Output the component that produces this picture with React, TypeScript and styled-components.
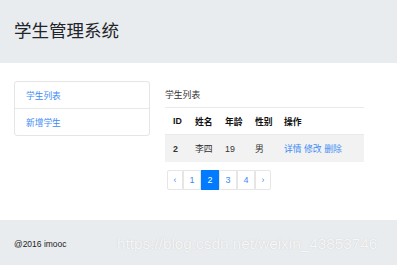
import styled, { createGlobalStyle } from "styled-components";

const GlobalStyle = createGlobalStyle`
  html, body {
    margin: 0;
    padding: 0;
    background: #fff;
  }
  body {
    font-family: "Liberation Sans", "Noto Sans CJK SC", sans-serif;
    color: #212529;
  }
`;

const students = [{ id: 2, name: "李四", age: 19, sex: "男" }];
const pages = ["‹", "1", "2", "3", "4", "›"];

export default function App() {
  return (
    <>
      <GlobalStyle />
      <Page>
        <Header>
          <Title>学生管理系统</Title>
        </Header>
        <Main>
          <SideMenu>
            <MenuItem>学生列表</MenuItem>
            <MenuItem>新增学生</MenuItem>
          </SideMenu>
          <Content>
            <Caption>学生列表</Caption>
            <Table>
              <colgroup>
                <Col w={22} />
                <Col w={30} />
                <Col w={30} />
                <Col w={29} />
                <col />
              </colgroup>
              <thead>
                <tr>
                  <Th>ID</Th>
                  <Th>姓名</Th>
                  <Th>年龄</Th>
                  <Th>性别</Th>
                  <Th>操作</Th>
                </tr>
              </thead>
              <tbody>
                {students.map((s) => (
                  <StripedRow key={s.id}>
                    <Td bold>{s.id}</Td>
                    <Td>{s.name}</Td>
                    <Td>{s.age}</Td>
                    <Td>{s.sex}</Td>
                    <Td>
                      <Action>详情</Action> <Action>修改</Action>{" "}
                      <Action>删除</Action>
                    </Td>
                  </StripedRow>
                ))}
              </tbody>
            </Table>
            <Pager>
              {pages.map((p, i) => (
                <PageBtn key={i} active={p === "2"} arrow={i === 0 || i === pages.length - 1}>
                  {p}
                </PageBtn>
              ))}
            </Pager>
          </Content>
        </Main>
        <Footer>
          <FooterText>@2016 imooc</FooterText>
          <Watermark>https://blog.csdn.net/weixin_43853746</Watermark>
        </Footer>
      </Page>
    </>
  );
}

const Page = styled.div`
  width: 397px;
  height: 265px;
  display: flex;
  flex-direction: column;
  overflow: hidden;
`;

const Header = styled.div`
  height: 63px;
  flex-shrink: 0;
  background: #e9ecef;
  display: flex;
  align-items: center;
  padding-left: 14px;
  box-sizing: border-box;
`;

const Title = styled.h1`
  margin: -4px 0 0;
  font-family: "Noto Sans CJK SC", sans-serif;
  font-weight: 400;
  font-size: 17.5px;
  color: #212529;
  line-height: 1;
`;

const Main = styled.div`
  display: flex;
  align-items: flex-start;
  padding: 18px 0 0 14px;
  gap: 15px;
  flex: 1;
`;

const SideMenu = styled.div`
  width: 136px;
  border: 1px solid #e5e5e5;
  border-radius: 3px;
  box-sizing: border-box;
  display: flex;
  flex-direction: column;
`;

const MenuItem = styled.div`
  height: 26px;
  display: flex;
  align-items: center;
  padding-left: 11px;
  font-family: "Noto Sans CJK SC", sans-serif;
  font-size: 8.7px;
  color: #3d8bf5;
  & + & {
    border-top: 1px solid #e8e8e8;
  }
`;

const Content = styled.div`
  width: 199px;
  display: flex;
  flex-direction: column;
  padding-top: 7px;
`;

const Caption = styled.div`
  font-family: "Noto Sans CJK SC", sans-serif;
  font-size: 8.8px;
  color: #333;
  height: 20px;
  line-height: 14px;
  border-bottom: 1px solid #eaeaea;
  box-sizing: border-box;
`;

const Table = styled.table`
  width: 100%;
  table-layout: fixed;
  border-collapse: collapse;
  font-size: 8.8px;
`;

const Col = styled.col<{ w: number }>`
  width: ${(p) => p.w}px;
`;

const Th = styled.th`
  height: 26px;
  padding: 0 0 0 8px;
  text-align: left;
  font-family: "Liberation Sans", "Noto Sans CJK SC", sans-serif;
  font-weight: 700;
  color: #111;
  border-bottom: 1px solid #eaeaea;
  white-space: nowrap;
`;

const StripedRow = styled.tr`
  background: #f2f2f2;
`;

const Td = styled.td<{ bold?: boolean }>`
  height: 27px;
  padding: 0 0 0 8px;
  font-family: "Liberation Sans", "Noto Sans CJK SC", sans-serif;
  font-weight: ${(p) => (p.bold ? 700 : 400)};
  color: #333;
  white-space: nowrap;
`;

const Action = styled.span`
  color: #3d8bf5;
`;

const Pager = styled.div`
  display: flex;
  margin: 8px 0 0 2px;
`;

const PageBtn = styled.div<{ active?: boolean; arrow?: boolean }>`
  width: ${(p) => (p.arrow ? 16 : 18)}px;
  height: 20px;
  box-sizing: border-box;
  display: flex;
  align-items: center;
  justify-content: center;
  font-family: "Liberation Sans", sans-serif;
  font-size: ${(p) => (p.arrow ? 8.5 : 9)}px;
  color: ${(p) => (p.active ? "#fff" : "#3d8bf5")};
  background: ${(p) => (p.active ? "#007bff" : "#fff")};
  border: 1px solid ${(p) => (p.active ? "#007bff" : "#e6e6e6")};
  &:first-child {
    border-radius: 2px 0 0 2px;
  }
  &:last-child {
    border-radius: 0 2px 2px 0;
  }
`;

const Footer = styled.div`
  position: relative;
  height: 45px;
  flex-shrink: 0;
  background: #e9ecef;
  display: flex;
  align-items: center;
  padding-left: 14px;
  box-sizing: border-box;
`;

const FooterText = styled.div`
  font-family: "Liberation Sans", sans-serif;
  font-size: 8.5px;
  color: #222;
  margin-top: 2px;
`;

const Watermark = styled.div`
  position: absolute;
  left: 117px;
  top: 15px;
  font-family: "Liberation Sans", sans-serif;
  font-size: 15.3px;
  color: rgba(255, 255, 255, 0.85);
  text-shadow: 0 0 1px rgba(170, 170, 170, 0.6);
  white-space: nowrap;
`;
